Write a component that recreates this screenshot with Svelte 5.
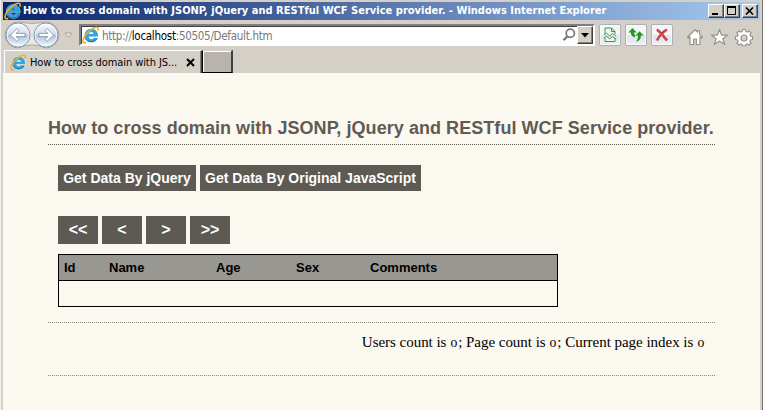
<script>
  const title = 'How to cross domain with JSONP, jQuery and RESTful WCF Service provider.';
  const columns = [
    ['Id', 45], ['Name', 107], ['Age', 80], ['Sex', 74], ['Comments', 187]
  ];
  const pages = ['<<', '<', '>', '>>'];
</script>

{#snippet ie(size)}
  <svg class="ie" width={size} height={size} viewBox="0 0 18 18">
    <path d="M9.300 2.800C5.300 2.800 2.500 5.700 2.500 9.500s2.900 6.700 6.900 6.700c3.200 0 5.500-1.600 6.300-4.200h-4c-.5.800-1.200 1.200-2.200 1.200-1.600 0-2.700-1-2.800-2.600H16C16.300 5.900 13.500 2.800 9.300 2.800zM6.800 8.100c.3-1.300 1.200-2.100 2.500-2.100s2.200.8 2.400 2.100z" fill="#35a5df" stroke="#e9f6fd" stroke-width=".7" paint-order="stroke" />
    <path d="M3.500 12.500c1 2.100 3 3.200 5.700 3.200 2.600 0 4.600-1.200 5.700-3.100" fill="none" stroke="#1270b8" />
    <path d="M4.200 16.300C1.700 17.500.6 16.300 1.200 13.600 2 9.800 6.800 4.300 11.700 2c3.400-1.600 5.200-.8 4.200 2.800" fill="none" stroke="#f1b51c" stroke-width="1.600" />
  </svg>
{/snippet}

<div class="window">
  <header class="titlebar">
    {@render ie(18)}
    <span class="caption">{title} - Windows Internet Explorer</span>
    <div class="controls">
      <span class="ctl"><svg width="14" height="12"><path d="M3 9h6" stroke="#000" stroke-width="2" /></svg></span>
      <span class="ctl"><svg width="14" height="12"><path d="M2.500 2v7.500h8V2" fill="none" stroke="#000" stroke-width="1" /><path d="M2 2h9" stroke="#000" stroke-width="2" /></svg></span>
      <span class="ctl close"><svg width="14" height="12"><path d="M3 2.500l7 7M10 2.500l-7 7" stroke="#000" stroke-width="1.700" /></svg></span>
    </div>
  </header>

  <nav class="toolbar">
    <svg class="history" width="56" height="30" viewBox="0 0 56 30">
      <defs>
        <linearGradient id="orb" x2="0" y2="1"><stop stop-color="#f7faff" /><stop offset=".45" stop-color="#d3dfee" /><stop offset=".52" stop-color="#afc3dc" /><stop offset="1" stop-color="#f4fbff" /></linearGradient>
      </defs>
      <path d="M14 2Q28 5 42 2A13 13 0 0 1 42 28Q28 22 14 28A13 13 0 0 1 14 2Z" fill="#e7e6e2" stroke="#aaa9a7" />
      {#each [14, 42] as cx}
        <circle {cx} cy="15" r="12" fill="url(#orb)" stroke="#8794a6" />
        <circle {cx} cy="15" r="10.800" fill="none" stroke="#fff" stroke-opacity=".8" />
      {/each}
      <g fill="#fff" stroke="#788ba5" stroke-width=".8" stroke-linejoin="round">
        <path d="M6.500 15l6.500-6.500 2 2-2.900 2.900H21v3.200h-8.900l2.900 2.900-2 2z" />
        <path d="M49.500 15l-6.500-6.500-2 2 2.900 2.900H35v3.200h8.900l-2.900 2.900 2 2z" />
      </g>
    </svg>
    <svg class="recent" width="9" height="7"><path d="M.8 1h7.400L4.500 5.500z" fill="#e5e3df" stroke="#aaa7a1" /></svg>
    <div class="address">
      {@render ie(18)}
      <span class="url">http://<b>localhost</b>:50505/Default.htm</span>
      <svg class="search" width="14" height="14"><circle cx="8.300" cy="5.300" r="4.100" fill="none" stroke="#777" stroke-width="1.700" /><path d="M5.200 8.500L1.500 12.300" stroke="#777" stroke-width="2.300" /></svg>
      <span class="drop"><svg width="8" height="5"><path d="M0 0h8L4 4.500z" /></svg></span>
    </div>
    <div class="actions">
      <span><svg width="14" height="16" viewBox="0 0 14 16"><path d="M2 7V1h6.500L12 4.500V7M2 11v3.500h10V11" fill="#eff8ef" stroke="#45944a" /><path d="M8.500 1v3.500H12" fill="none" stroke="#45944a" /><path d="M1 8l2.500-2 3 3 3-2.500L13 9M1 11l2.500-2 3 3 3-2.500L13 12" fill="none" stroke="#469a4d" /></svg></span>
      <span><svg width="16" height="16" viewBox="0 0 16 16" fill="#299527"><path d="M4.500 1L.3 5.400h2.500q.1 4 4.200 4.800V7.800Q5.800 7.200 6 5.400h2.700z" /><path d="M11.500 4.200L7.300 8.600H10q.2 4-2 6 5-.5 4.900-6h2.800z" /></svg></span>
      <span><svg width="14" height="14" viewBox="0 0 14 14"><path d="M2 1.500q5 4 10 11M12 1.500Q6 5 2 12.500" fill="none" stroke="#bf3439" stroke-width="2.500" /><path d="M2.500 2l9 9.500M11.500 2L3 11" stroke="#e36a67" stroke-width=".8" /></svg></span>
    </div>
    <svg class="commands" width="68" height="18" viewBox="0 0 68 18" fill="#fff" stroke="#96938d" stroke-width="1.200" stroke-linejoin="round">
      <path d="M1.500 9L9 1.800l2.500 2.400V2.500h2v3.600L16.500 9l-1 1-1.500-1.300v7.800h-3.600V11H7.600v5.500H4V8.700L2.500 10z" />
      <path d="M33.500 1.500l2 5.600h6.200l-4.900 3.600 1.900 5.800-5.200-3.500-5.200 3.500 1.900-5.800-4.900-3.600h6.200z" />
      <path d="M56.500 1.500h3l.4 2 1.400.6 1.700-1.200 2.100 2.100L63.900 6.700l.6 1.400 2 .4v3l-2 .4-.6 1.400 1.200 1.700-2.100 2.100-1.700-1.200-1.400.6-.4 1.300h-3l-.4-1.300-1.400-.6L53 17.100 50.900 15l1.200-1.700-.6-1.400-2-.4v-3l2-.4.6-1.400L50.900 5 53 2.900l1.700 1.200 1.400-.6z" />
      <circle cx="58" cy="10" r="3" fill="#d4d0c8" />
    </svg>
  </nav>

  <div class="tabs">
    <div class="tab">
      {@render ie(17)}
      <span>How to cross domain with JS...</span>
      <svg width="9" height="9"><path d="M1 1l7 7M8 1L1 8" stroke="#000" stroke-width="2" /></svg>
    </div>
    <div class="newtab"></div>
  </div>

  <main>
    <h1>{title}</h1>
    <section>
      <div class="fetch"><button class="query">Get Data By jQuery</button><button class="plain">Get Data By Original JavaScript</button></div>
      <div class="pager">{#each pages as label}<button>{label}</button>{/each}</div>
      <div class="grid">
        <div class="head">{#each columns as [name, width]}<span style="width:{width}px">{name}</span>{/each}</div>
        <div class="empty"></div>
      </div>
    </section>
    <p class="status"><span>Users count is <i>0</i>; Page count is <i>0</i>; Current page index is <i>0</i></span></p>
  </main>
</div>

<style>
  :global(body) { overflow: hidden; }
  * { box-sizing: border-box; }
  svg { display: block; flex: none; }
  .window { width: 763px; height: 410px; background: #d4d0c8; border-left: 1px solid #f4f3f0; border-right: 1px solid #77736c; padding: 2px 1px 0 2px; display: flex; flex-direction: column; font-family: "Noto Sans", sans-serif; white-space: nowrap; }
  .titlebar { width: 757px; height: 18px; display: flex; align-items: center; background: linear-gradient(90deg, #0a246a, #a6caf0); padding-left: 1px; }
  .caption { color: #fff; font: bold 11px/18px "DejaVu Sans Condensed", "DejaVu Sans", sans-serif; font-stretch: condensed; margin-left: 1px; width: 590px; letter-spacing: .015px; }
  .controls { display: flex; margin-left: auto; padding-right: 2px; }
  .ctl { width: 16px; height: 14px; background: #d4d0c8; border: 1px solid; border-color: #fff #404040 #404040 #fff; box-shadow: inset -1px -1px #808080; }
  .close { margin-left: 2px; }
  .toolbar { height: 30px; width: 757px; display: flex; align-items: center; }
  .history { margin-left: 1px; }
  .recent { margin-left: 4px; margin-top: 1px; }
  .address { margin-left: 6px; width: 516px; height: 22px; background: #fff; border: 2px solid; border-color: #808080 #fff #fff #808080; box-shadow: inset 1px 1px #404040; display: flex; align-items: center; padding-left: 1px; }
  .url { font: 11.500px/16px "DejaVu Sans Condensed", "DejaVu Sans", sans-serif; font-stretch: condensed; color: #777; margin-left: 2px; padding-top: 1px; letter-spacing: -.28px; }
  .url b { font-weight: normal; color: #000; }
  .search { margin-left: auto; }
  .drop { width: 16px; height: 18px; margin-left: 1px; background: #d4d0c8; border: 1px solid; border-color: #fff #404040 #404040 #fff; box-shadow: inset -1px -1px #808080; display: flex; align-items: center; justify-content: center; }
  .actions { display: flex; gap: 4px; margin-left: 4px; }
  .actions span { width: 22px; height: 22px; border: 1px solid #aeb0b7; border-radius: 2px; background: linear-gradient(#f4f5f9 0 48%, #dfe3ed 50%, #edf0f7); box-shadow: inset 0 0 0 1px #f8f9fb; display: flex; align-items: center; justify-content: center; }
  .commands { margin: 4px 0 0 13px; }
  .tabs { width: 757px; height: 23px; display: flex; align-items: flex-end; }
  .tab { width: 198px; height: 23px; border-top: 1px solid #fff; border-left: 1px solid #fff; border-right: 1px solid #404040; box-shadow: inset -1px 0 #808080; display: flex; align-items: center; padding-left: 5px; margin-left: 1px; }
  .tab span { font: 11px/18px "DejaVu Sans Condensed", "DejaVu Sans", sans-serif; font-stretch: condensed; width: 156px; padding-top: 2px; margin-left: 3px; letter-spacing: -.08px; }
  .newtab { width: 31px; height: 23px; background: #b8b3ac; border: solid; border-width: 1px 2px 1px 1px; border-color: #d4d0c8 #404040 #000 #000; box-shadow: inset 1px 1px #fff; }
  main { width: 757px; height: 337px; background: #fbf8ef; padding: 45px 45px 0; font-family: "Liberation Sans", Arial, sans-serif; }
  h1 { font-size: 18px; line-height: 20px; margin: 0; height: 27px; width: 667px; color: #5f5b54; border-bottom: 1px dotted #5f5b54; letter-spacing: .055px; }
  section { width: 667px; height: 178px; padding: 20px 10px 0; border-bottom: 1px dotted #8b887e; }
  button { border: 0; padding: 0; background: #5d5a53; color: #fff; font: bold 14px/26px "Liberation Sans", Arial, sans-serif; height: 26px; }
  .fetch, .pager { display: flex; gap: 4px; }
  .query { width: 138px; }
  .plain { width: 221px; }
  .pager { margin-top: 25px; }
  .pager button { width: 40px; height: 28px; font-size: 16px; }
  .grid { width: 500px; height: 53px; border: 1px solid #000; margin-top: 10px; }
  .head { display: flex; height: 26px; padding-left: 5px; background: #999791; border-bottom: 1px solid #000; font-weight: bold; font-size: 13px; line-height: 25px; }
  .status { width: 667px; height: 53px; margin: 0; padding-right: 10px; border-bottom: 1px dotted #8b887e; text-align: right; font: 15px/38px "Liberation Serif", serif; letter-spacing: -.03px; }
  .status i { display: inline-block; font-style: normal; font-size: 11px; line-height: 1; transform: scaleX(1.250); width: 8px; text-align: center; }
</style>
